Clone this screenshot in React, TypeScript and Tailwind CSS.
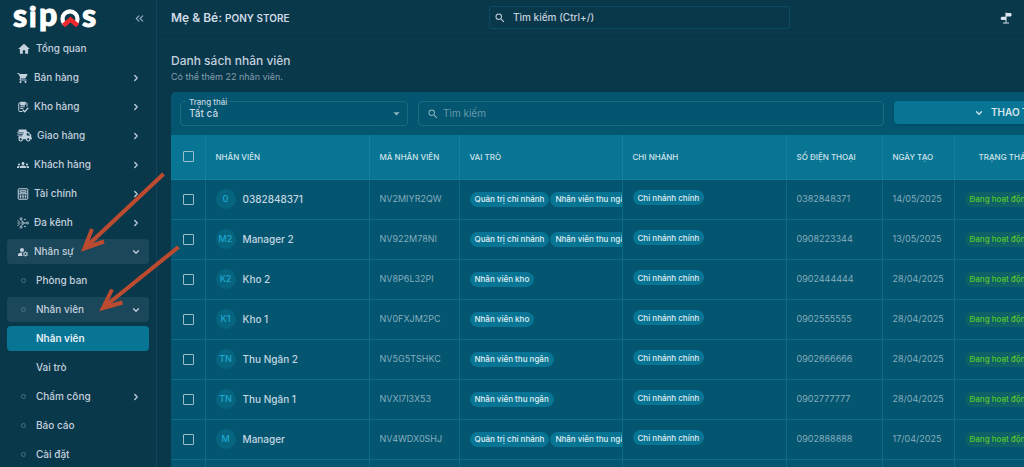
import React from "react";
import { memo } from "react";
import clsx from "clsx";
import { FaShippingFast } from "react-icons/fa";
import {
    MdArrowDropDown,
    MdGroups,
    MdHome,
    MdManageAccounts,
    MdSearch,
    MdShoppingCart,
} from "react-icons/md";
import { ChevronDown, ChevronRight, ChevronsLeft } from "lucide-react";

interface IMenuItem {
    label: string;
    icon?: React.ReactNode;
    level?: number;
    arrow?: "right" | "down";
    state?: "open" | "active";
    bullet?: boolean;
}

interface IEmployee {
    name: string;
    initials: string;
    code: string;
    roles: string[];
    phone: string;
    created: string;
}

const ClipboardIcon = () => (
    <svg viewBox="0 0 24 24" className="size-3" fill="none" stroke="currentColor" strokeWidth="2">
        <path d="M11 21H5.500Q3.500 21 3.500 19V5.500Q3.500 3.500 5.500 3.500H18Q20 3.500 20 5.500V11" />
        <path d="M7.500 2.500h8.500v5.500H7.500z" fill="currentColor" />
        <path d="M6.500 11.500h9M6.500 15h6" />
        <path d="M11.500 17.500l4 4 7-8" strokeWidth="2.600" />
    </svg>
);

const CalculatorIcon = () => (
    <svg viewBox="0 0 24 24" className="size-3" fill="none" stroke="currentColor" strokeWidth="2">
        <rect x="2.500" y="1.500" width="19" height="21" rx="1.500" />
        <path d="M6 5.500h12v3H6zM3 11.500h18" />
        <path d="M5.500 14.500h3M10.500 14.500h3M15.500 14.500h3M5.500 17h3M10.500 17h3M15.500 17h3M5.500 19.700h3M10.500 19.700h3M15.500 19.700h3" />
    </svg>
);

const ChannelIcon = () => (
    <svg viewBox="0 0 24 24" className="size-3" fill="none" stroke="currentColor" strokeWidth="1.700">
        <circle cx="12" cy="12" r="2.300" />
        <circle cx="21" cy="12" r="2" />
        <circle cx="8" cy="3.500" r="2" />
        <circle cx="8" cy="20.500" r="2" />
        <circle cx="16" cy="5" r="1" />
        <circle cx="16" cy="19" r="1" />
        <path d="M14.500 12H19M10.800 10L9 5.500M10.800 14L9 18.500M1 7l4 2M1 17l4-2M1 12h6" />
    </svg>
);

const SignpostIcon = () => (
    <svg viewBox="0 0 24 24" className="size-3" fill="currentColor">
        <path d="M11 1h2v1h9l1.500 3.500L22 9h-9v2h-2z" />
        <path d="M3 9.500h10v12h-2V16H3l-2-3.200z" />
        <path d="M6 21h12v2H6z" />
    </svg>
);

const MENU: IMenuItem[] = [
    { label: "Tổng quan", icon: <MdHome className="size-[14px]" /> },
    { label: "Bán hàng", icon: <MdShoppingCart className="size-3" />, arrow: "right" },
    { label: "Kho hàng", icon: <ClipboardIcon />, arrow: "right" },
    { label: "Giao hàng", icon: <FaShippingFast className="size-[15px]" />, arrow: "right" },
    { label: "Khách hàng", icon: <MdGroups className="size-3" stroke="currentColor" />, arrow: "right" },
    { label: "Tài chính", icon: <CalculatorIcon />, arrow: "right" },
    { label: "Đa kênh", icon: <ChannelIcon />, arrow: "right" },
    { label: "Nhân sự", icon: <MdManageAccounts className="size-3" />, arrow: "down", state: "open" },
    { label: "Phòng ban", level: 1, bullet: true },
    { label: "Nhân viên", level: 1, bullet: true, arrow: "down", state: "open" },
    { label: "Nhân viên", level: 1, state: "active" },
    { label: "Vai trò", level: 1 },
    { label: "Chấm công", level: 1, bullet: true, arrow: "right" },
    { label: "Báo cáo", level: 1, bullet: true },
    { label: "Cài đặt", level: 1, bullet: true },
];

const EMPLOYEES: IEmployee[] = [
    { name: "0382848371", initials: "0", code: "NV2MIYR2QW", roles: ["Quản trị chi nhánh", "Nhân viên thu ngân"], phone: "0382848371", created: "14/05/2025" },
    { name: "Manager 2", initials: "M2", code: "NV922M78NI", roles: ["Quản trị chi nhánh", "Nhân viên thu ngân"], phone: "0908223344", created: "13/05/2025" },
    { name: "Kho 2", initials: "K2", code: "NV8P6L32PI", roles: ["Nhân viên kho"], phone: "0902444444", created: "28/04/2025" },
    { name: "Kho 1", initials: "K1", code: "NV0FXJM2PC", roles: ["Nhân viên kho"], phone: "0902555555", created: "28/04/2025" },
    { name: "Thu Ngân 2", initials: "TN", code: "NV5G5TSHKC", roles: ["Nhân viên thu ngân"], phone: "0902666666", created: "28/04/2025" },
    { name: "Thu Ngân 1", initials: "TN", code: "NVXI7I3X53", roles: ["Nhân viên thu ngân"], phone: "0902777777", created: "28/04/2025" },
    { name: "Manager", initials: "M", code: "NV4WDX0SHJ", roles: ["Quản trị chi nhánh", "Nhân viên thu ngân"], phone: "0902888888", created: "17/04/2025" },
];

const Logo = () => (
    <svg viewBox="0 0 86 36" className="h-9 w-[86px] overflow-visible" role="img" aria-label="sipos">
        <g fill="#fff" stroke="#fff" strokeWidth="1" fontFamily="Lato, sans-serif" fontWeight="900" fontSize="32">
            <text x="0" y="27">s</text>
            <text x="16" y="27" fontSize="29">i</text>
            <text x="26" y="26">p</text>
            <text x="69" y="27">s</text>
        </g>
        <path d="M51.500 24A7.500 7.500 0 1 1 62.500 24" fill="none" stroke="#fff" strokeWidth="4.200" />
        <path d="M50.500 25.500L57.500 19.500L64.500 25.500" fill="none" stroke="#ee2a2e" strokeWidth="4.500" />
    </svg>
);

const Sidebar = () => (
    <aside className="w-[157px] shrink-0 border-r border-[#12435a]">
        <div className="flex h-9 items-center justify-between pl-[13px] pr-[10px]">
            <Logo />
            <button type="button" aria-label="Thu gọn" className="text-[#8fa9ba]">
                <ChevronsLeft className="size-[13px]" />
            </button>
        </div>
        <nav className="flex flex-col gap-1 px-[7px]">
            {MENU.map(({ label, icon, level, arrow, state, bullet }, index) => (
                <a
                    key={index}
                    href="#"
                    className={clsx(
                        "flex h-[25px] items-center rounded-[4px] pr-2 text-[10px] font-medium text-[#c3d0dd]",
                        level ? "pl-[14px]" : "pl-[10px]",
                        state === "open" && "bg-[#1b475a]",
                        state === "active" && "bg-[#077593] font-semibold text-[#e6f0f6]"
                    )}
                >
                    {level ? (
                        <span className="flex w-[15px] shrink-0">
                            {bullet && <span className="size-[5px] rounded-full border border-[#4b7283]" />}
                        </span>
                    ) : (
                        <span className="mr-[5px] flex shrink-0">{icon}</span>
                    )}
                    <span className="flex-1 whitespace-nowrap">{label}</span>
                    {arrow === "right" && <ChevronRight className="size-[10px]" strokeWidth={3} />}
                    {arrow === "down" && <ChevronDown className="size-[10px]" strokeWidth={3} />}
                </a>
            ))}
        </nav>
    </aside>
);

const TopBar = () => (
    <header className="flex h-9 items-center border-b border-[#0a3245] pl-[14px] pr-3">
        <div className="w-[318px] shrink-0 text-[12px] font-semibold text-[#d0dbe6]">
            Mẹ &amp; Bé: <span className="text-[10px]">PONY STORE</span>
        </div>
        <label className="flex h-[23px] w-[301px] items-center gap-[7px] rounded-[3px] border border-[#094d65] px-1 text-[#c3d0dd]">
            <MdSearch className="size-3 shrink-0" />
            <input
                type="text"
                aria-label="Tìm kiếm nhanh"
                placeholder="Tìm kiếm (Ctrl+/)"
                className="min-w-0 flex-1 bg-transparent text-[10px] font-medium outline-none placeholder:text-[#c3d0dd]"
            />
        </label>
        <button type="button" aria-label="Hướng dẫn" className="ml-auto text-[#dbe5ee]">
            <SignpostIcon />
        </button>
    </header>
);

const Toolbar = () => (
    <div className="grid grid-cols-4 gap-[10px] px-[9px] py-[9px]">
        <div className="relative h-[25px]">
            <label htmlFor="status" className="absolute -top-[4px] left-[6px] bg-[#035570] px-[3px] text-[8px] leading-[10px] font-medium text-[#c3d6e0]">
                Trạng thái
            </label>
            <select
                id="status"
                className="block h-full w-full appearance-none rounded-[4px] border border-[#1f6a83] bg-transparent px-2 text-[10px] font-medium text-[#c3d6e0] outline-none"
            >
                <option>Tất cả</option>
            </select>
            <MdArrowDropDown className="pointer-events-none absolute top-[5px] right-[4px] size-[15px] text-[#8fb3c1]" />
        </div>
        <label className="col-span-2 flex h-[25px] items-center gap-1 rounded-[4px] border border-[#1f6a83] px-2 text-[#8fb3c1]">
            <MdSearch className="size-3 shrink-0" />
            <input
                type="text"
                aria-label="Tìm kiếm nhân viên"
                placeholder="Tìm kiếm"
                className="min-w-0 flex-1 bg-transparent text-[10px] outline-none placeholder:text-[#6899ab]"
            />
        </label>
        <button type="button" className="flex h-[23px] items-center justify-center gap-[7px] rounded-[4px] bg-[#077593] text-[10px] font-semibold text-[#d6e6ee] shadow">
            <ChevronDown className="size-[10px]" strokeWidth={3} />
            THAO TÁC
        </button>
    </div>
);

const Tag = ({ children }: { children: React.ReactNode }) => (
    <span className="flex h-[15px] shrink-0 items-center rounded-full bg-[#077593] px-[5px] text-[8px] font-medium whitespace-nowrap text-[#e2f0f5]">
        {children}
    </span>
);

const Checkbox = ({ label }: { label: string }) => (
    <input type="checkbox" aria-label={label} className="block size-[11px] appearance-none rounded-[1px] border border-[#9abdca]" />
);

const HEADERS = ["NHÂN VIÊN", "MÃ NHÂN VIÊN", "VAI TRÒ", "CHI NHÁNH", "SỐ ĐIỆN THOẠI", "NGÀY TẠO"];

const EmployeeTable = () => (
    <table className="w-full table-fixed border-collapse text-[9px] text-[#86adbd]">
        <colgroup>
            <col className="w-[34px]" />
            <col className="w-[164px]" />
            <col className="w-[90px]" />
            <col className="w-[163px]" />
            <col className="w-[164px]" />
            <col className="w-[96px]" />
            <col className="w-[72px]" />
            <col />
        </colgroup>
        <thead>
            <tr className="h-11 bg-[#077593] text-left text-[8px] text-[#d0e2ea]">
                <th className="border-r border-b border-[#15809c] pl-3">
                    <Checkbox label="Chọn tất cả" />
                </th>
                {HEADERS.map((header) => (
                    <th key={header} className="border-r border-b border-[#15809c] pl-[10px] font-medium whitespace-nowrap">
                        {header}
                    </th>
                ))}
                <th className="border-b border-[#15809c] pl-6 font-medium whitespace-nowrap">TRẠNG THÁI</th>
            </tr>
        </thead>
        <tbody>
            {[...EMPLOYEES, null].map((employee, index) => (
                <tr key={index} className="h-10 [&>td]:border-r [&>td]:border-b [&>td]:border-[#0e6a85] [&>td]:pl-[10px]">
                    {employee ? (
                        <React.Fragment>
                            <td>
                                <div className="pl-[2px]">
                                    <Checkbox label={employee.name} />
                                </div>
                            </td>
                            <td>
                                <div className="flex items-center gap-[7px]">
                                    <span className="flex size-5 items-center justify-center rounded-full bg-[#07647f] text-[9px] font-medium text-[#1ea7cf]">
                                        {employee.initials}
                                    </span>
                                    <span className="text-[10px] font-medium text-[#c3d6e0]">{employee.name}</span>
                                </div>
                            </td>
                            <td>{employee.code}</td>
                            <td>
                                <div className="flex gap-px overflow-hidden">
                                    {employee.roles.map((role) => (
                                        <Tag key={role}>{role}</Tag>
                                    ))}
                                </div>
                            </td>
                            <td>
                                <div className="flex pb-[3px]">
                                    <Tag>Chi nhánh chính</Tag>
                                </div>
                            </td>
                            <td>{employee.phone}</td>
                            <td>{employee.created}</td>
                            <td>
                                <span className="inline-flex h-[15px] items-center rounded-full bg-[#0f6067] px-[5px] text-[8px] font-medium whitespace-nowrap text-[#56ca2c]">
                                    Đang hoạt động
                                </span>
                            </td>
                        </React.Fragment>
                    ) : (
                        Array.from({ length: 8 }).map((_, cell) => <td key={cell} />)
                    )}
                </tr>
            ))}
        </tbody>
    </table>
);

// hand-drawn pointers over the "Nhân sự" and "Nhân viên" entries
const Pointers = () => (
    <svg className="pointer-events-none absolute top-40 left-20 h-40 w-28" viewBox="80 160 112 160" fill="none" stroke="#bd4b2f" strokeWidth="4">
        <path d="M163.500 174L86 247" />
        <path d="M92 229L84.500 248.500L104 241.500" />
        <path d="M178.500 247L104 307" />
        <path d="M112 289.500L103 308L122.500 302.500" />
    </svg>
);

const App = () => {
    return (
        <div className="relative flex h-screen overflow-hidden bg-[#0a384b] font-['Inter',sans-serif]">
            <Sidebar />
            <div className="min-w-0 flex-1 overflow-hidden">
                <TopBar />
                <main className="pl-[14px]">
                    <h1 className="pt-4 text-[12px] leading-[18px] font-medium text-[#c3d0dd]">Danh sách nhân viên</h1>
                    <p className="text-[9px] leading-[14px] text-[#849fae]">Có thể thêm 22 nhân viên.</p>
                    <section className="mt-2 min-w-[960px] rounded-[5px] bg-[#035570]">
                        <Toolbar />
                        <EmployeeTable />
                    </section>
                </main>
            </div>
            <Pointers />
        </div>
    );
};

export default memo(App);
